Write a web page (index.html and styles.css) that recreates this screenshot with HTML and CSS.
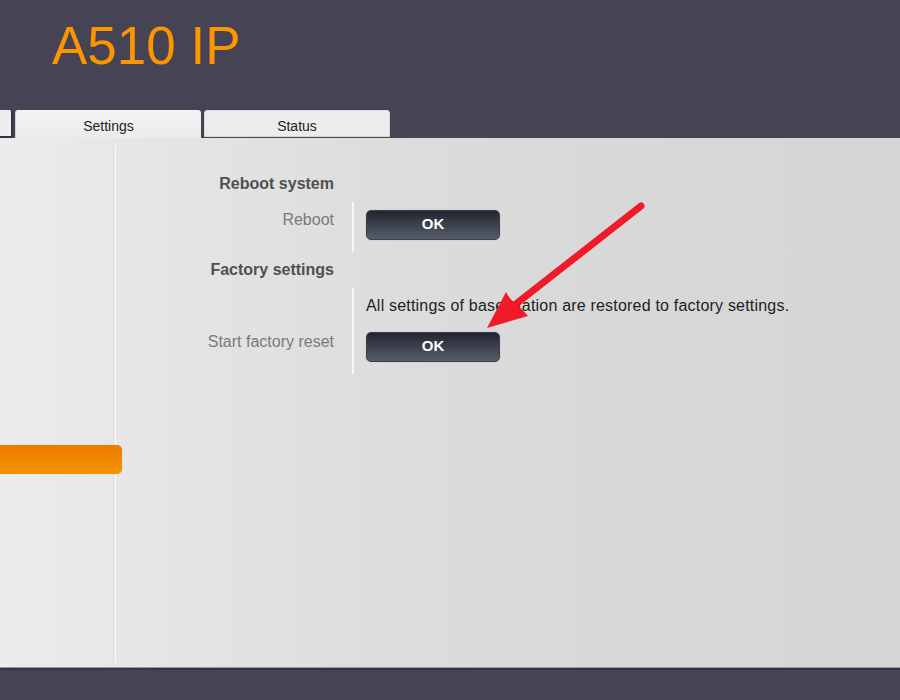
FILE: index.html
```html
<!DOCTYPE html>
<html>
<head>
<meta charset="utf-8">
<title>A510 IP</title>
<link rel="stylesheet" href="styles.css">
</head>
<body>
<div class="page">
  <header class="header">
    <div class="title">A510 IP</div>
    <nav class="tabs">
      <div class="tab tab-partial"></div>
      <div class="tab tab-active">Settings</div>
      <div class="tab tab-status">Status</div>
    </nav>
  </header>
  <main class="main">
    <aside class="sidebar">
      <div class="side-btn"></div>
    </aside>
    <section class="content">
      <h2 class="section-title">Reboot system</h2>
      <div class="row">
        <div class="label">Reboot</div>
        <div class="value">
          <button class="ok">OK</button>
        </div>
      </div>
      <h2 class="section-title">Factory settings</h2>
      <div class="row">
        <div class="label label-low">Start factory reset</div>
        <div class="value">
          <div class="desc">All settings of base station are restored to factory settings.</div>
          <button class="ok">OK</button>
        </div>
      </div>
    </section>
  </main>
  <footer class="footer"></footer>
  <svg class="arrow" viewBox="0 0 900 700" width="900" height="700">
    <line x1="641" y1="206" x2="512" y2="307" stroke="#f01a28" stroke-width="7" stroke-linecap="round"/>
    <path d="M487 328 L506 292 Q510 300 516 304 Q522 309 528 316 Z" fill="#f01a28"/>
  </svg>
</div>
</body>
</html>
```
FILE: styles.css
```css
* { box-sizing: border-box; }
html, body { margin: 0; padding: 0; }
body {
  font-family: "Liberation Sans", Arial, sans-serif;
  background: #454354;
  overflow: hidden;
}
.page {
  position: relative;
  width: 900px;
  height: 700px;
  display: flex;
  flex-direction: column;
}
.header {
  height: 138px;
  background: #454354;
  display: flex;
  flex-direction: column;
  justify-content: space-between;
}
.title {
  color: #fb9500;
  font-size: 53px;
  line-height: 60px;
  padding: 16px 0 0 52px;
}
.tabs {
  display: flex;
  align-items: flex-end;
  gap: 2px;
  height: 28px;
}
.tab {
  width: 186px;
  height: 28px;
  font-size: 14px;
  line-height: 22px;
  padding-top: 5px;
  text-align: center;
  color: #222;
  border-radius: 3px 3px 0 0;
}
.tab-partial {
  margin-left: -173px;
  background: #eeeeee;
  border-right: 2px solid #35333f;
  border-bottom: 2px solid #35333f;
}
.tab-active {
  background: linear-gradient(#f3f3f3, #ebebeb);
  border-left: 1px solid #cfcfd4;
}
.tab-status {
  margin-left: 1px;
  height: 27px;
  margin-bottom: 1px;
  padding-top: 4px;
  background: #ededed;
  border: 1px solid #d8d8dc;
}
.main {
  height: 529px;
  display: flex;
  background: linear-gradient(to right, #ececec 0%, #e6e6e6 15%, #dcdcdc 45%, #d7d7d7 75%, #d6d6d6 100%);
}
.sidebar {
  width: 116px;
  margin: 7px 0 4px 0;
  border-right: 1px solid #fbfbfb;
  display: flex;
  flex-direction: column;
}
.side-btn {
  margin-top: 300px;
  margin-left: -10px;
  width: 132px;
  height: 29px;
  border-radius: 5px;
  background: linear-gradient(#ef7a00, #f39300);
  box-shadow: 0 0 1px rgba(0,0,0,0.25);
}
.content {
  padding: 28px 0 0 24px;
  flex: 1;
}
.section-title {
  width: 194px;
  margin: 7px 0 9px 0;
  padding-top: 1px;
  height: 20px;
  font-size: 16px;
  line-height: 20px;
  font-weight: bold;
  text-align: right;
  color: #505050;
}
.row {
  display: flex;
}
.label {
  width: 194px;
  padding-top: 8px;
  font-size: 16px;
  line-height: 20px;
  text-align: right;
  color: #7a7a7a;
}
.label-low {
  padding-top: 44px;
}
.value {
  margin-left: 18px;
  border-left: 2px solid #f6f6f6;
  padding: 8px 0 12px 12px;
  display: flex;
  flex-direction: column;
  align-items: flex-start;
}
.desc {
  font-size: 16px;
  line-height: 20px;
  letter-spacing: 0.2px;
  color: #1e1e1e;
  margin-top: 0;
  margin-bottom: 16px;
  white-space: nowrap;
}
.ok {
  width: 134px;
  height: 30px;
  border: 1px solid #3b404b;
  border-radius: 5px;
  background: linear-gradient(#20252f, #4a505c 75%, #555b67);
  color: #ffffff;
  font-family: "Liberation Sans", Arial, sans-serif;
  font-weight: bold;
  font-size: 15px;
  line-height: 24px;
  padding: 0 0 3px 0;
  box-shadow: 0 0 1px rgba(0,0,0,0.4);
}
.footer {
  flex: 1;
  background: #454354;
  border-top: 1px solid #9a9a9a;
  box-shadow: inset 0 2px 0 #363444;
}
.arrow {
  position: absolute;
  left: 0;
  top: 0;
  pointer-events: none;
}
```
